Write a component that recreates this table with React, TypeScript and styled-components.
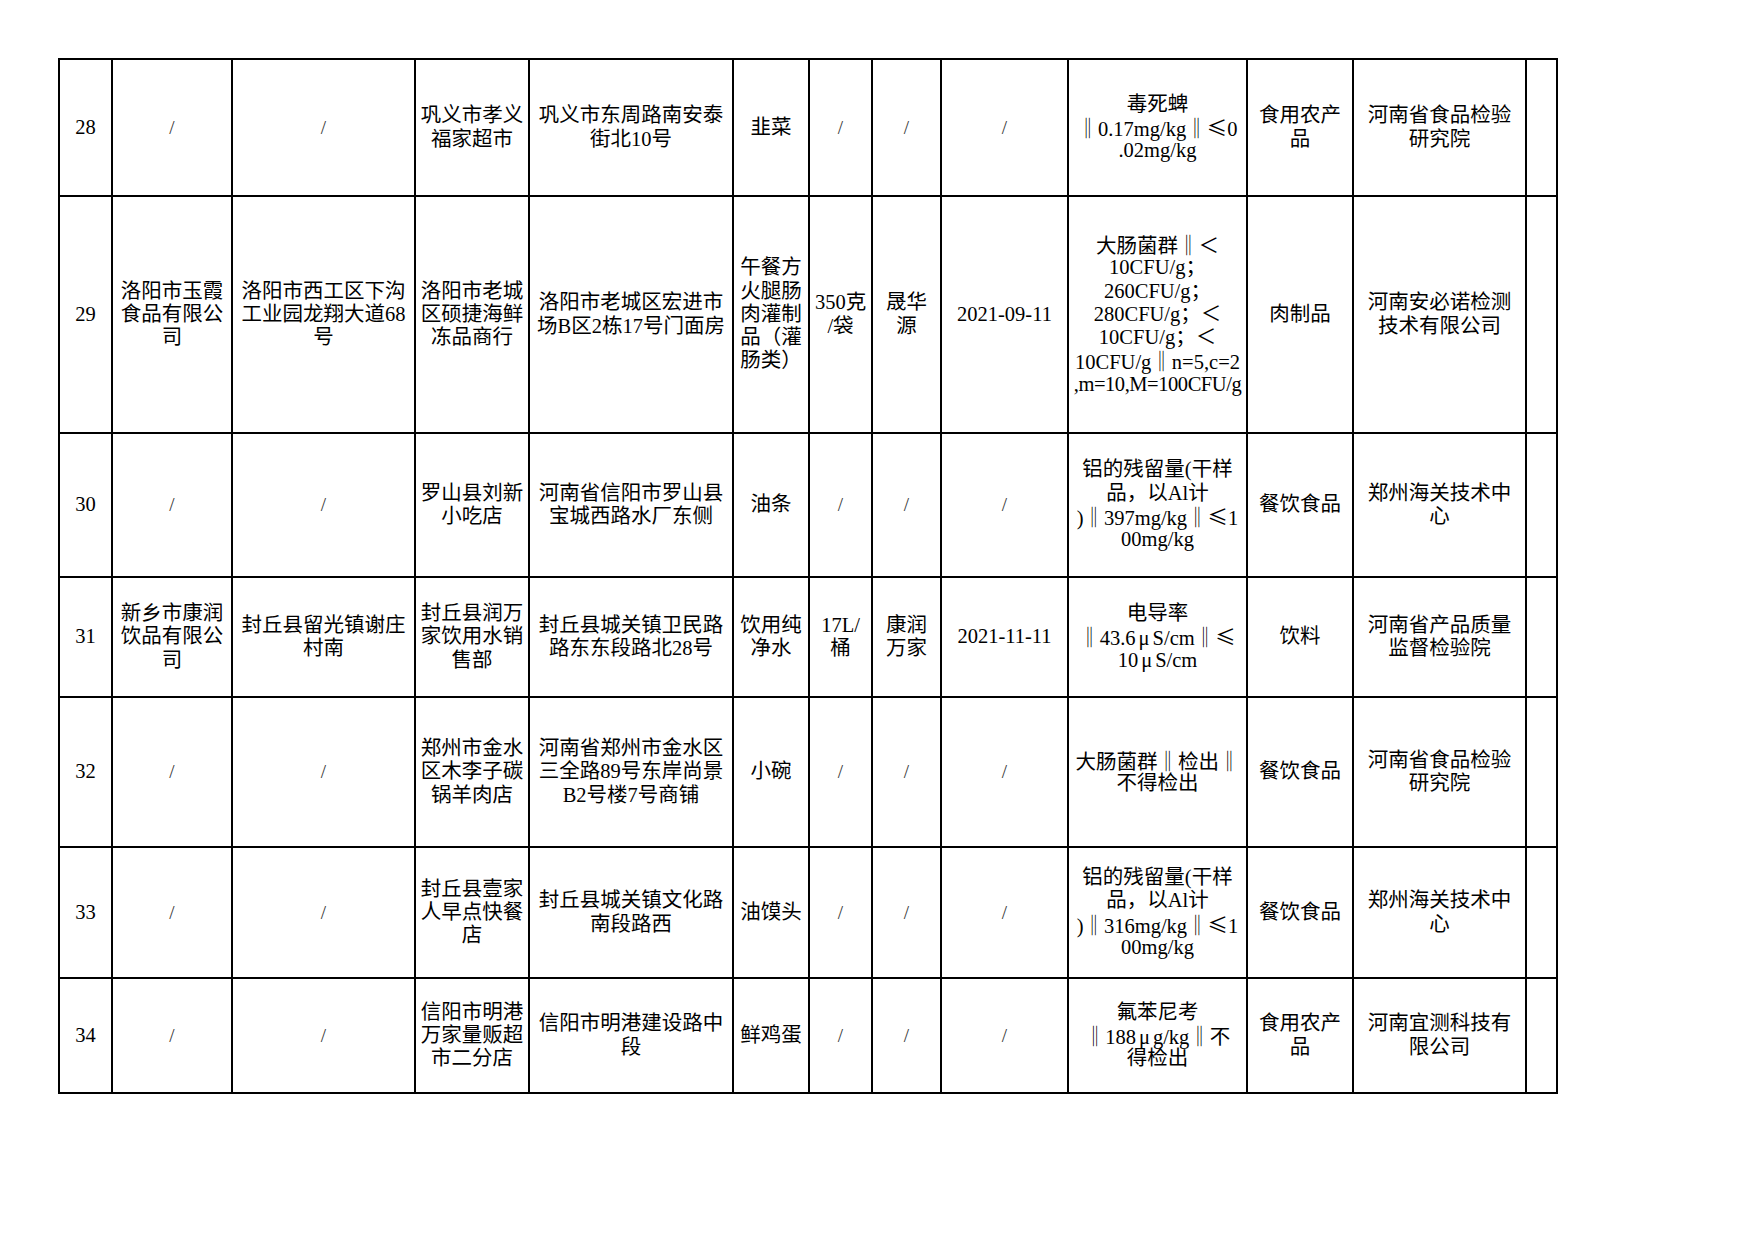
import React from 'react';
import styled, { createGlobalStyle } from 'styled-components';

// Page reset
const GlobalStyle = createGlobalStyle`
  html, body {
    margin: 0;
    padding: 0;
    background: #fff;
  }
  body {
    font-family: "Liberation Serif", "Noto Sans CJK SC", serif;
    color: #000;
  }
`;

const Page = styled.div`
  width: 1754px;
  height: 1241px;
  box-sizing: border-box;
  padding: 58px 0 0 58px;
  background: #fff;
`;

const Sheet = styled.table`
  border-collapse: collapse;
  table-layout: fixed;
  width: 1500px;
`;

const Row = styled.tr<{ $h: number }>`
  height: ${(p) => p.$h}px;
`;

const Cell = styled.td`
  border: 2px solid #000;
  padding: 0 4px;
  text-align: center;
  vertical-align: middle;
  font-size: 20.5px;
  line-height: 23.3px;
  white-space: nowrap;
  overflow: visible;
`;

const Line = styled.span<{ $tight?: boolean }>`
  display: block;
  height: 23.3px;
  letter-spacing: ${(p) => (p.$tight ? '-0.45px' : 'normal')};
`;

// full-width symbols (‖ ≤) as the sheet's Song font draws them
const Sym = styled.span`
  font-family: "Noto Sans CJK SC", sans-serif;
`;

// the Greek mu sits with a little air on each side
const Mu = styled.span`
  padding: 0 3px;
`;

const Slash = styled.span`
  display: inline-block;
  font-size: 19px;
  color: #333;
  font-weight: 300;
`;

const colWidths = [53, 120, 183, 114, 204, 76, 63, 69, 127, 179, 106, 173, 31];

type RowData = { h: number; cells: string[] };

const rows: RowData[] = [
  {
    h: 137,
    cells: [
      '28', '/', '/', '巩义市孝义\n福家超市', '巩义市东周路南安泰\n街北10号', '韭菜', '/', '/', '/',
      '毒死蜱\n‖0.17mg/kg‖≤0\n.02mg/kg', '食用农产\n品', '河南省食品检验\n研究院', '',
    ],
  },
  {
    h: 237,
    cells: [
      '29', '洛阳市玉霞\n食品有限公\n司', '洛阳市西工区下沟\n工业园龙翔大道68\n号', '洛阳市老城\n区硕捷海鲜\n冻品商行',
      '洛阳市老城区宏进市\n场B区2栋17号门面房', '午餐方\n火腿肠\n肉灌制\n品（灌\n肠类）', '350克\n/袋', '晟华\n源', '2021-09-11',
      '大肠菌群‖＜\n10CFU/g；\n260CFU/g；\n280CFU/g；＜\n10CFU/g；＜\n10CFU/g‖n=5,c=2\n~,m=10,M=100CFU/g',
      '肉制品', '河南安必诺检测\n技术有限公司', '',
    ],
  },
  {
    h: 144,
    cells: [
      '30', '/', '/', '罗山县刘新\n小吃店', '河南省信阳市罗山县\n宝城西路水厂东侧', '油条', '/', '/', '/',
      '铝的残留量(干样\n品，以Al计\n)‖397mg/kg‖≤1\n00mg/kg', '餐饮食品', '郑州海关技术中\n心', '',
    ],
  },
  {
    h: 120,
    cells: [
      '31', '新乡市康润\n饮品有限公\n司', '封丘县留光镇谢庄\n村南', '封丘县润万\n家饮用水销\n售部',
      '封丘县城关镇卫民路\n路东东段路北28号', '饮用纯\n净水', '17L/\n桶', '康润\n万家', '2021-11-11',
      '电导率\n‖43.6μS/cm‖≤\n10μS/cm', '饮料', '河南省产品质量\n监督检验院', '',
    ],
  },
  {
    h: 150,
    cells: [
      '32', '/', '/', '郑州市金水\n区木李子碳\n锅羊肉店', '河南省郑州市金水区\n三全路89号东岸尚景\nB2号楼7号商铺', '小碗', '/', '/', '/',
      '大肠菌群‖检出‖\n不得检出', '餐饮食品', '河南省食品检验\n研究院', '',
    ],
  },
  {
    h: 131,
    cells: [
      '33', '/', '/', '封丘县壹家\n人早点快餐\n店', '封丘县城关镇文化路\n南段路西', '油馍头', '/', '/', '/',
      '铝的残留量(干样\n品，以Al计\n)‖316mg/kg‖≤1\n00mg/kg', '餐饮食品', '郑州海关技术中\n心', '',
    ],
  },
  {
    h: 115,
    cells: [
      '34', '/', '/', '信阳市明港\n万家量贩超\n市二分店', '信阳市明港建设路中\n段', '鲜鸡蛋', '/', '/', '/',
      '氟苯尼考\n‖188μg/kg‖不\n得检出', '食用农产\n品', '河南宜测科技有\n限公司', '',
    ],
  },
];

const renderLine = (text: string) =>
  text.split(/([‖≤μ])/).map((part, i) => {
    if (part === 'μ') return <Mu key={i}>μ</Mu>;
    if (part === '‖' || part === '≤') return <Sym key={i}>{part}</Sym>;
    return <React.Fragment key={i}>{part}</React.Fragment>;
  });

const CellText: React.FC<{ text: string }> = ({ text }) => {
  if (text === '/') return <Slash>/</Slash>;
  const lines = text.split('\n');
  if (lines.length === 1) return <>{renderLine(text)}</>;
  return (
    <>
      {lines.map((l, i) => {
        const tight = l.startsWith('~');
        return (
          <Line key={i} $tight={tight}>
            {renderLine(tight ? l.slice(1) : l)}
          </Line>
        );
      })}
    </>
  );
};

const App: React.FC = () => {
  return (
    <Page>
      <GlobalStyle />
      <Sheet>
        <colgroup>
          {colWidths.map((w, i) => (
            <col key={i} style={{ width: w }} />
          ))}
        </colgroup>
        <tbody>
          {rows.map((r, ri) => (
            <Row key={ri} $h={r.h}>
              {r.cells.map((c, ci) => (
                <Cell key={ci}>
                  <CellText text={c} />
                </Cell>
              ))}
            </Row>
          ))}
        </tbody>
      </Sheet>
    </Page>
  );
};

export default App;
